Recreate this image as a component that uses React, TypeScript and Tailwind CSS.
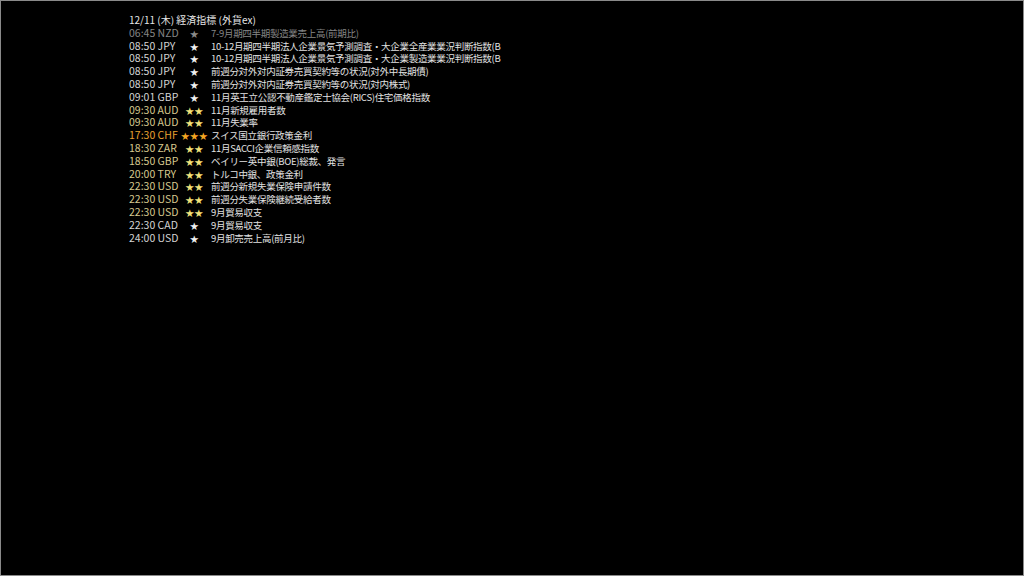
import React from 'react';

type Row = { time: string; cur: string; stars: number; text: string; past?: boolean };

const rows: Row[] = [
  { time: '06:45', cur: 'NZD', stars: 1, text: '7-9月期四半期製造業売上高(前期比)', past: true },
  { time: '08:50', cur: 'JPY', stars: 1, text: '10-12月期四半期法人企業景気予測調査・大企業全産業業況判断指数(B' },
  { time: '08:50', cur: 'JPY', stars: 1, text: '10-12月期四半期法人企業景気予測調査・大企業製造業業況判断指数(B' },
  { time: '08:50', cur: 'JPY', stars: 1, text: '前週分対外対内証券売買契約等の状況(対外中長期債)' },
  { time: '08:50', cur: 'JPY', stars: 1, text: '前週分対外対内証券売買契約等の状況(対内株式)' },
  { time: '09:01', cur: 'GBP', stars: 1, text: '11月英王立公認不動産鑑定士協会(RICS)住宅価格指数' },
  { time: '09:30', cur: 'AUD', stars: 2, text: '11月新規雇用者数' },
  { time: '09:30', cur: 'AUD', stars: 2, text: '11月失業率' },
  { time: '17:30', cur: 'CHF', stars: 3, text: 'スイス国立銀行政策金利' },
  { time: '18:30', cur: 'ZAR', stars: 2, text: '11月SACCI企業信頼感指数' },
  { time: '18:50', cur: 'GBP', stars: 2, text: 'ベイリー英中銀(BOE)総裁、発言' },
  { time: '20:00', cur: 'TRY', stars: 2, text: 'トルコ中銀、政策金利' },
  { time: '22:30', cur: 'USD', stars: 2, text: '前週分新規失業保険申請件数' },
  { time: '22:30', cur: 'USD', stars: 2, text: '前週分失業保険継続受給者数' },
  { time: '22:30', cur: 'USD', stars: 2, text: '9月貿易収支' },
  { time: '22:30', cur: 'CAD', stars: 1, text: '9月貿易収支' },
  { time: '24:00', cur: 'USD', stars: 1, text: '9月卸売売上高(前月比)' },
];

function timeColor(r: Row) {
  if (r.past) return 'text-[#858585]';
  if (r.stars === 3) return 'text-[#e8a030]';
  if (r.stars === 2) return 'text-[#d6c88e]';
  return 'text-[#d4d4d4]';
}

function starColor(r: Row) {
  if (r.past) return 'text-[#8a8a8a]';
  if (r.stars === 3) return 'text-[#f5a623]';
  if (r.stars === 2) return 'text-[#f2e27a]';
  return 'text-[#f0f0f0]';
}

export default function App() {
  return (
    <div className="w-[1024px] h-[576px] bg-black border border-[#8a8a8a] font-['Noto_Sans_CJK_JP',sans-serif] leading-[12.8px]">
      <div className="pt-[13px] pl-[128px]">
        <div className="text-[#e6e6e6] h-[12.8px] text-[10px]">12/11 (木) 経済指標 (外貨ex)</div>
        {rows.map((r, i) => (
          <div key={i} className="flex items-center h-[12.8px] whitespace-nowrap">
            <div className={`w-[51px] text-[10.5px] ${timeColor(r)}`}>
              {r.time} {r.cur}
            </div>
            <div className={`w-[29px] text-center text-[8.5px] tracking-[0.5px] ${starColor(r)}`}>
              {'★'.repeat(r.stars)}
            </div>
            <div className={`pl-[2px] text-[9.5px] tracking-[-0.3px] ${r.past ? 'text-[#858585]' : 'text-[#e2e2e2]'}`}>
              {r.text}
            </div>
          </div>
        ))}
      </div>
    </div>
  );
}
